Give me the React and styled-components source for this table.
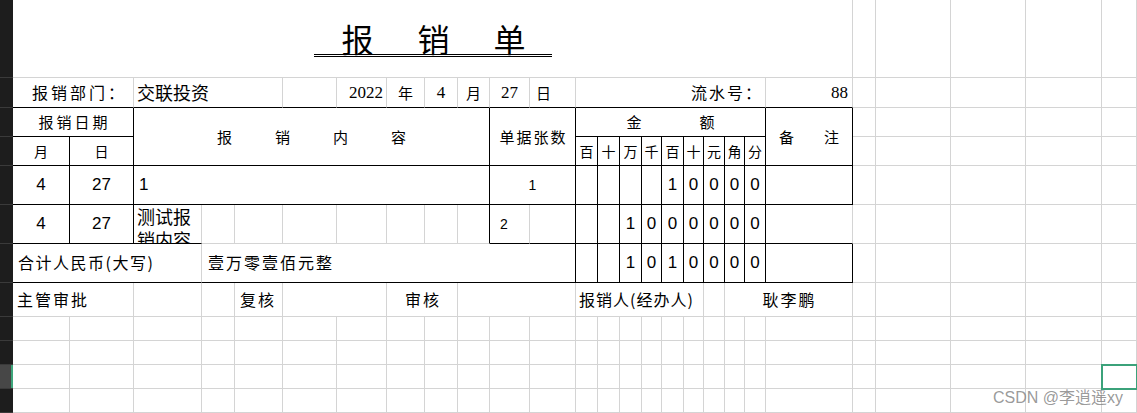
import styled, { createGlobalStyle } from "styled-components";

const CJK = `"Noto Sans CJK SC", "Noto Sans", sans-serif`;
const SERIF = `"Liberation Serif", "Noto Sans CJK SC", serif`;
const SANS = `"Liberation Sans", "Noto Sans CJK SC", sans-serif`;

const GRID = "#d4d4d4";

const columns = [
  13, 57, 64, 68, 33, 48, 54, 50, 38, 33, 32, 40, 46, 22, 22, 22, 20, 22, 20,
  21, 20, 21, 87, 23, 75, 75, 76,
];
const rows = [78, 30, 29, 29, 39, 39, 39, 34, 24, 24, 24, 24];

const units = ["百", "十", "万", "千", "百", "十", "元", "角", "分"];
const amounts = [
  ["", "", "", "", "1", "0", "0", "0", "0"],
  ["", "", "1", "0", "0", "0", "0", "0", "0"],
  ["", "", "1", "0", "1", "0", "0", "0", "0"],
];

const GlobalStyle = createGlobalStyle`
  * { box-sizing: border-box; }
  html, body { margin: 0; padding: 0; background: #fff; overflow: hidden; }
`;

const Page = styled.div`
  position: relative;
  width: 1137px;
  height: 413px;
  overflow: hidden;
  background: #fff;
`;

const Sheet = styled.div`
  display: grid;
  grid-template-columns: ${columns.map((c) => `${c}px`).join(" ")} 1fr;
  grid-template-rows: ${rows.map((r) => `${r}px`).join(" ")};
  width: 100%;
`;

const RowHead = styled.div`
  background: ${(p) => (p.$sel ? "#474747" : "#1d1d1d")};
  border-bottom: 1px solid #3a3a3a;
  box-shadow: ${(p) => (p.$sel ? "inset -2px 0 0 #3da57a" : "none")};
`;

const alignMap = { left: "flex-start", center: "center", right: "flex-end" };

const Cell = styled.div`
  grid-column: span ${(p) => p.$span || 1};
  grid-row: span ${(p) => p.$rows || 1};
  position: relative;
  display: flex;
  align-items: ${(p) => (p.$top ? "flex-start" : "center")};
  justify-content: ${(p) => alignMap[p.$align || "left"]};
  padding: 0 ${(p) => p.$pr || 0}px 0 ${(p) => p.$pl || 0}px;
  border-right: 1px solid ${(p) => (p.$br ? "#000" : GRID)};
  border-bottom: 1px solid ${(p) => (p.$bb ? "#000" : GRID)};
  overflow: ${(p) => (p.$sel ? "visible" : "hidden")};
  white-space: nowrap;
  min-width: 0;
  color: #000;
  z-index: ${(p) => (p.$sel ? 2 : "auto")};

  ${(p) =>
    p.$sel &&
    `
    &::after {
      content: "";
      position: absolute;
      left: -1px;
      top: -1px;
      right: -2px;
      bottom: -2px;
      border: 2px solid #3ba27a;
    }
  `}
`;

const TitleCell = styled(Cell)`
  align-items: flex-end;
  justify-content: center;
  padding-bottom: 20px;
`;

const Title = styled.span`
  display: flex;
  gap: 44px;
  width: 238px;
  padding-left: 28px;
  font-family: ${CJK};
  font-size: 32px;
  line-height: 32px;
  border-bottom: 3px double #000;
  white-space: nowrap;
`;

const Label = styled.span`
  display: inline-flex;
  gap: ${(p) => p.$gap || 0}px;
  font-family: ${CJK};
  font-size: ${(p) => p.$size || 16}px;
  line-height: 1.2;
`;

const Wrapped = styled.span`
  font-family: ${CJK};
  font-size: 18px;
  line-height: 23px;
  white-space: normal;
  word-break: break-all;
  width: 100%;
`;

const SerifNum = styled.span`
  font-family: ${SERIF};
  font-size: 17px;
`;

const SansNum = styled.span`
  font-family: ${SANS};
  font-size: ${(p) => p.$size || 17}px;
`;

const Watermark = styled.div`
  position: absolute;
  left: 993px;
  top: 384px;
  font-family: "Liberation Sans", "Noto Sans CJK SC", sans-serif;
  font-size: 16px;
  color: rgba(128, 128, 128, 0.8);
  white-space: nowrap;
  pointer-events: none;
`;

// spaced text: each character is its own box so the gap never trails
const Spaced = ({ text, gap, size }) => (
  <Label $gap={gap} $size={size}>
    {[...text].map((ch, i) => (
      <span key={i}>{ch}</span>
    ))}
  </Label>
);

const Blank = ({ n, sel = -1 }) =>
  Array.from({ length: n }, (_, i) => <Cell key={i} $sel={i === sel} />);

const AmountCells = ({ values }) =>
  values.map((v, i) => (
    <Cell key={i} $br $bb $align="center">
      <SansNum>{v}</SansNum>
    </Cell>
  ));

export default function App() {
  return (
    <Page>
      <GlobalStyle />
      <Sheet>
        {/* row 1 */}
        <RowHead />
        <TitleCell $span={22}>
          <Title>
            <span>报</span>
            <span>销</span>
            <span>单</span>
          </Title>
        </TitleCell>
        <Blank n={5} />

        {/* row 2 */}
        <RowHead />
        <Cell $span={2} $bb $pl={19}>
          <Spaced text="报销部门：" gap={3} />
        </Cell>
        <Cell $span={3} $bb $pl={3}>
          <Label $size={18}>交联投资</Label>
        </Cell>
        <Cell $bb />
        <Cell $bb $align="right" $pr={3}>
          <SerifNum>2022</SerifNum>
        </Cell>
        <Cell $bb $align="center">
          <Label $size={15}>年</Label>
        </Cell>
        <Cell $bb $align="center">
          <SerifNum>4</SerifNum>
        </Cell>
        <Cell $bb $align="center">
          <Label $size={15}>月</Label>
        </Cell>
        <Cell $bb $align="center">
          <SerifNum>27</SerifNum>
        </Cell>
        <Cell $bb $pl={6}>
          <Label $size={15}>日</Label>
        </Cell>
        <Cell $span={9} $bb $align="right" $pr={4}>
          <Spaced text="流水号：" gap={2} />
        </Cell>
        <Cell $bb $align="right" $pr={4}>
          <SerifNum>88</SerifNum>
        </Cell>
        <Blank n={5} />

        {/* row 3 */}
        <RowHead />
        <Cell $span={2} $br $bb $align="center">
          <Spaced text="报销日期" gap={3} size={15} />
        </Cell>
        <Cell $span={8} $rows={2} $br $bb $align="center">
          <Spaced text="报销内容" gap={43} size={15} />
        </Cell>
        <Cell $span={2} $rows={2} $br $bb $align="center">
          <Spaced text="单据张数" gap={2} size={15} />
        </Cell>
        <Cell $span={9} $br $bb $align="center">
          <Spaced text="金额" gap={58} size={15} />
        </Cell>
        <Cell $rows={2} $br $bb $align="center">
          <Spaced text="备注" gap={30} size={15} />
        </Cell>
        <Blank n={5} />

        {/* row 4 */}
        <RowHead />
        <Cell $br $bb $align="center">
          <Label $size={14}>月</Label>
        </Cell>
        <Cell $br $bb $align="center">
          <Label $size={14}>日</Label>
        </Cell>
        {units.map((u, i) => (
          <Cell key={i} $br $bb $align="center">
            <Label $size={14}>{u}</Label>
          </Cell>
        ))}
        <Blank n={5} />

        {/* row 5 */}
        <RowHead />
        <Cell $br $bb $align="center">
          <SansNum>4</SansNum>
        </Cell>
        <Cell $br $bb $align="center">
          <SansNum>27</SansNum>
        </Cell>
        <Cell $span={8} $br $bb $pl={5}>
          <SansNum>1</SansNum>
        </Cell>
        <Cell $span={2} $br $bb $align="center">
          <SansNum $size={14}>1</SansNum>
        </Cell>
        <AmountCells values={amounts[0]} />
        <Cell $br $bb />
        <Blank n={5} />

        {/* row 6 */}
        <RowHead />
        <Cell $br $bb $align="center">
          <SansNum>4</SansNum>
        </Cell>
        <Cell $br $bb $align="center">
          <SansNum>27</SansNum>
        </Cell>
        <Cell $bb $top $pl={3}>
          <Wrapped>测试报销内容</Wrapped>
        </Cell>
        <Cell />
        <Cell />
        <Cell />
        <Cell />
        <Cell />
        <Cell />
        <Cell $br />
        <Cell $bb $pl={10}>
          <SansNum $size={14}>2</SansNum>
        </Cell>
        <Cell $br $bb />
        <AmountCells values={amounts[1]} />
        <Cell $bb />
        <Blank n={5} />

        {/* row 7 */}
        <RowHead />
        <Cell $span={3} $bb $pl={5}>
          <Spaced text="合计人民币(大写)" gap={1.5} />
        </Cell>
        <Cell $span={9} $br $bb $pl={6}>
          <Spaced text="壹万零壹佰元整" gap={2} />
        </Cell>
        <AmountCells values={amounts[2]} />
        <Cell $br $bb />
        <Blank n={5} />

        {/* row 8 */}
        <RowHead />
        <Cell $span={2} $pl={4}>
          <Spaced text="主管审批" gap={2} />
        </Cell>
        <Cell />
        <Cell />
        <Cell $pl={5}>
          <Spaced text="复核" gap={2} />
        </Cell>
        <Cell $span={2} />
        <Cell $span={2} $align="center">
          <Spaced text="审核" gap={2} />
        </Cell>
        <Cell $span={3} />
        <Cell $span={6} $pl={3}>
          <Spaced text="报销人(经办人)" gap={1} />
        </Cell>
        <Cell />
        <Cell $span={3} $align="center">
          <Spaced text="耿李鹏" gap={2} />
        </Cell>
        <Blank n={5} />

        {/* rows 9 - 12 */}
        <RowHead />
        <Blank n={27} />
        <RowHead />
        <Blank n={27} />
        <RowHead $sel />
        <Blank n={27} sel={26} />
        <RowHead />
        <Blank n={27} />
      </Sheet>
      <Watermark>CSDN @李逍遥xy</Watermark>
    </Page>
  );
}
